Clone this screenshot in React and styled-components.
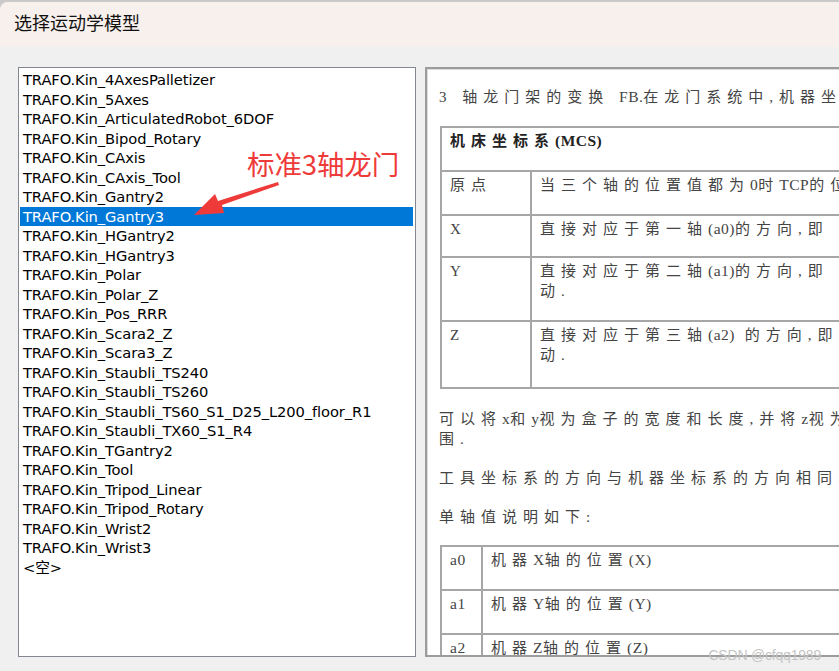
import React from 'react';
import styled, { createGlobalStyle } from 'styled-components';

const GlobalStyle = createGlobalStyle`
  html, body {
    margin: 0;
    padding: 0;
    background: #c9c9c9;
  }
  #root {
    width: 839px;
    height: 671px;
    overflow: hidden;
  }
`;

const Window = styled.div`
  position: relative;
  display: flex;
  flex-direction: column;
  width: 839px;
  height: 669px;
  margin-top: 2px;
  background: #f0f0f0;
  border-top-left-radius: 8px;
  overflow: hidden;
`;

const TitleBar = styled.div`
  height: 45px;
  flex: none;
  display: flex;
  align-items: center;
  padding: 0 0 5px 14px;
  box-sizing: border-box;
  background: #f8f0ec;
  font-family: "Noto Sans CJK SC", "Liberation Sans", sans-serif;
  font-size: 18px;
  color: #111;
`;

const Body = styled.div`
  flex: 1;
  display: flex;
  gap: 9px;
  padding: 20px 0 14px 18px;
  min-height: 0;
`;

const ListBox = styled.div`
  position: relative;
  width: 396px;
  flex: none;
  background: #fff;
  border: 1px solid #828790;
  padding-top: 2px;
  font-family: "DejaVu Sans", "Noto Sans CJK SC", sans-serif;
  font-size: 14.7px;
  letter-spacing: -0.1px;
`;

const Item = styled.div`
  height: 19.5px;
  line-height: 19.5px;
  margin: 0 2px 0 1px;
  padding-left: 3px;
  white-space: nowrap;
  color: ${p => (p.$selected ? '#fff' : '#000')};
  background: ${p => (p.$selected ? '#0078d7' : 'transparent')};
`;

const Callout = styled.div`
  position: absolute;
  left: 228px;
  top: 75px;
  font-family: "Noto Sans CJK SC", sans-serif;
  font-size: 27.5px;
  color: #ef3a3a;
  white-space: nowrap;
`;

const Arrow = styled.svg`
  position: absolute;
  left: 0;
  top: 0;
  pointer-events: none;
`;

const DocPanel = styled.div`
  flex: none;
  width: 440px;
  background: #fff;
  border: 2px solid #9c9c9c;
  box-shadow: inset 1px 1px 0 #dcdcdc;
  padding: 18px 0 0 12px;
  overflow: hidden;
  font-family: "Liberation Serif", "Noto Sans CJK SC", serif;
  font-size: 15px;
  color: #444;
  letter-spacing: 6px;
  white-space: nowrap;
`;

const L = styled.span`
  letter-spacing: 0.5px;
  font-size: 15.5px;
`;

const Para = styled.div`
  line-height: 20px;
  margin-bottom: ${p => p.$mb || 19}px;
`;

const Table = styled.div`
  width: 460px;
  margin-left: 1px;
  margin-bottom: ${p => p.$mb || 0}px;
  border: 2px solid #a6a6a6;
  border-bottom: none;
`;

const Row = styled.div`
  display: grid;
  grid-template-columns: ${p => p.$col}px 1fr;
  height: ${p => p.$h}px;
  border-bottom: 2px solid #a6a6a6;
  box-sizing: border-box;
`;

const Cell = styled.div`
  padding: 3px 0 0 8px;
  line-height: 20px;
  font-weight: ${p => (p.$bold ? 700 : 400)};
  color: ${p => (p.$bold ? '#222' : '#444')};
  & + & {
    border-left: 2px solid #a6a6a6;
  }
`;

const Watermark = styled.div`
  position: absolute;
  right: 18px;
  bottom: 8px;
  font-family: "Liberation Sans", sans-serif;
  font-size: 14px;
  color: #c4c4c4;
  letter-spacing: -0.2px;
`;

const items = [
  'TRAFO.Kin_4AxesPalletizer',
  'TRAFO.Kin_5Axes',
  'TRAFO.Kin_ArticulatedRobot_6DOF',
  'TRAFO.Kin_Bipod_Rotary',
  'TRAFO.Kin_CAxis',
  'TRAFO.Kin_CAxis_Tool',
  'TRAFO.Kin_Gantry2',
  'TRAFO.Kin_Gantry3',
  'TRAFO.Kin_HGantry2',
  'TRAFO.Kin_HGantry3',
  'TRAFO.Kin_Polar',
  'TRAFO.Kin_Polar_Z',
  'TRAFO.Kin_Pos_RRR',
  'TRAFO.Kin_Scara2_Z',
  'TRAFO.Kin_Scara3_Z',
  'TRAFO.Kin_Staubli_TS240',
  'TRAFO.Kin_Staubli_TS260',
  'TRAFO.Kin_Staubli_TS60_S1_D25_L200_floor_R1',
  'TRAFO.Kin_Staubli_TX60_S1_R4',
  'TRAFO.Kin_TGantry2',
  'TRAFO.Kin_Tool',
  'TRAFO.Kin_Tripod_Linear',
  'TRAFO.Kin_Tripod_Rotary',
  'TRAFO.Kin_Wrist2',
  'TRAFO.Kin_Wrist3',
  '<空>',
];

const App = () => {
  return (
    <>
      <GlobalStyle />
      <Window>
        <TitleBar>选择运动学模型</TitleBar>
        <Body>
          <ListBox>
            {items.map((name, i) => (
              <Item key={i} $selected={name === 'TRAFO.Kin_Gantry3'}>{name}</Item>
            ))}
            <Callout>标准3轴龙门</Callout>
            <Arrow width="396" height="200" viewBox="0 0 396 200">
              {/* tapered arrow pointing at the selected row */}
              <polygon
                points="259,114 260,117 203,137 205,145 175,147 196,126 199,133"
                fill="#ef3a3a"
              />
            </Arrow>
          </ListBox>
          <DocPanel>
            <Para>3 轴龙门架的变换 <L>FB.</L>在龙门系统中,机器坐标系</Para>
            <Table $mb={20}>
              <Row $col={1000} $h={44}>
                <Cell $bold>机床坐标系<L>(MCS)</L></Cell>
              </Row>
              <Row $col={88} $h={44}>
                <Cell>原点</Cell>
                <Cell>当三个轴的位置值都为<L>0</L>时<L>TCP</L>的位置</Cell>
              </Row>
              <Row $col={88} $h={42}>
                <Cell>X</Cell>
                <Cell>直接对应于第一轴<L>(a0)</L>的方向,即</Cell>
              </Row>
              <Row $col={88} $h={64}>
                <Cell>Y</Cell>
                <Cell>直接对应于第二轴<L>(a1)</L>的方向,即<br />动.</Cell>
              </Row>
              <Row $col={88} $h={67}>
                <Cell>Z</Cell>
                <Cell>直接对应于第三轴<L>(a2)</L> 的方向,即<br />动.</Cell>
              </Row>
            </Table>
            <Para>可以将<L>x</L>和<L>y</L>视为盒子的宽度和长度,并将<L>z</L>视为<br />围.</Para>
            <Para>工具坐标系的方向与机器坐标系的方向相同.</Para>
            <Para $mb={18}>单轴值说明如下:</Para>
            <Table>
              <Row $col={39} $h={44}>
                <Cell><L>a0</L></Cell>
                <Cell>机器<L>X</L>轴的位置<L>(X)</L></Cell>
              </Row>
              <Row $col={39} $h={44}>
                <Cell><L>a1</L></Cell>
                <Cell>机器<L>Y</L>轴的位置<L>(Y)</L></Cell>
              </Row>
              <Row $col={39} $h={44}>
                <Cell><L>a2</L></Cell>
                <Cell>机器<L>Z</L>轴的位置<L>(Z)</L></Cell>
              </Row>
            </Table>
          </DocPanel>
        </Body>
        <Watermark>CSDN @cfqq1989</Watermark>
      </Window>
    </>
  );
};

export default App;
